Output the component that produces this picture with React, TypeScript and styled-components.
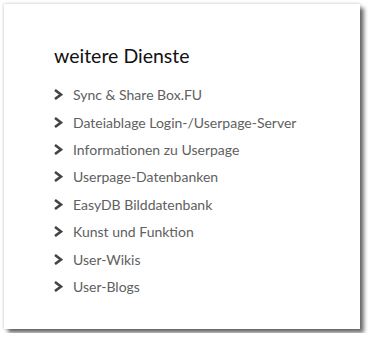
import * as React from 'react'
import styled, { createGlobalStyle } from 'styled-components'

const GlobalStyle = createGlobalStyle`
  html, body {
    margin: 0;
    padding: 0;
    background: #fff;
  }
  body {
    padding: 4px;
    font-family: Lato, "Open Sans", sans-serif;
  }
`

const Card = styled.div`
  width: 356px;
  height: 325px;
  box-sizing: border-box;
  background: #fff;
  padding: 38px 20px 0 50px;
  box-shadow: 0 0 3px rgba(0, 0, 0, 0.25), 4px 4px 4px rgba(0, 0, 0, 0.55);
`

const Heading = styled.h2`
  margin: 0 0 11px 0;
  font-size: 19.5px;
  font-weight: 400;
  color: #111;
  line-height: 28px;
`

const List = styled.ul`
  list-style: none;
  margin: 0;
  padding: 0;
`

const Item = styled.li`
  display: flex;
  align-items: center;
  height: 27.4px;
  color: #606060;
  font-size: 14px;
`

const Chevron = styled.svg`
  width: 9px;
  height: 11px;
  margin-right: 10px;
  flex-shrink: 0;
`

const links = [
  'Sync & Share Box.FU',
  'Dateiablage Login-/Userpage-Server',
  'Informationen zu Userpage',
  'Userpage-Datenbanken',
  'EasyDB Bilddatenbank',
  'Kunst und Funktion',
  'User-Wikis',
  'User-Blogs',
]

export default function App() {
  return (
    <>
      <GlobalStyle />
      <Card>
        <Heading>weitere Dienste</Heading>
        <List>
          {links.map(l => (
            <Item key={l}>
              <Chevron viewBox="0 0 9 11">
                <path d="M1 1 L7 5.5 L1 10" fill="none" stroke="#444" strokeWidth="2.6" strokeLinejoin="miter" />
              </Chevron>
              {l}
            </Item>
          ))}
        </List>
      </Card>
    </>
  )
}
